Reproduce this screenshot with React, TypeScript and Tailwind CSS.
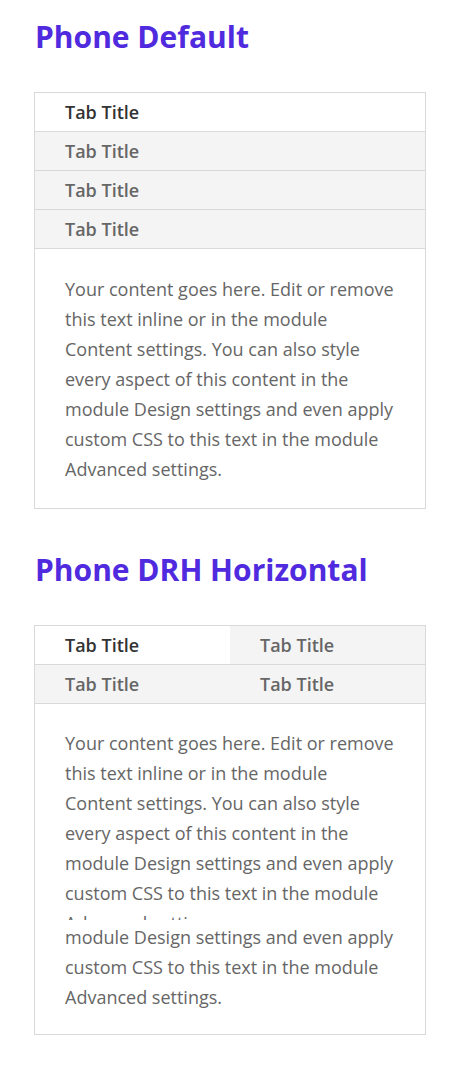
import React from "react";

const LINES = [
  "Your content goes here. Edit or remove",
  "this text inline or in the module",
  "Content settings. You can also style",
  "every aspect of this content in the",
  "module Design settings and even apply",
  "custom CSS to this text in the module",
  "Advanced settings.",
];

function Lines({ lines }: { lines: string[] }) {
  return (
    <>
      {lines.map((l, i) => (
        <p key={i} className="whitespace-nowrap">
          {l}
        </p>
      ))}
    </>
  );
}

function Heading({ children }: { children: React.ReactNode }) {
  return (
    <h2 className="pl-px text-[30px] font-bold leading-[30px] text-[#502ade]">
      {children}
    </h2>
  );
}

function Tab({ active, children }: { active?: boolean; children: React.ReactNode }) {
  return (
    <div
      className={
        "px-[30px] py-1 text-[18px] font-semibold leading-[30px] " +
        (active ? "bg-white text-[#333333]" : "bg-[#f4f4f4] text-[#666666]")
      }
    >
      {children}
    </div>
  );
}

export default function App() {
  return (
    <div
      className="min-h-[1068px] w-[458px] bg-white pl-[34px] pt-[22px]"
      style={{ fontFamily: '"Open Sans", "Liberation Sans", sans-serif' }}
    >
      <Heading>Phone Default</Heading>
      <div className="mt-[40px] w-[392px] border border-[#d9d9d9]">
        <div className="flex flex-col">
          <div className="border-b border-[#d9d9d9]">
            <Tab active>Tab Title</Tab>
          </div>
          <div className="border-b border-[#d9d9d9]">
            <Tab>Tab Title</Tab>
          </div>
          <div className="border-b border-[#d9d9d9]">
            <Tab>Tab Title</Tab>
          </div>
          <div className="border-b border-[#d9d9d9]">
            <Tab>Tab Title</Tab>
          </div>
        </div>
        <div className="px-[30px] pb-6 pt-[25px] text-[18px] leading-[30px] text-[#666666]">
          <Lines lines={LINES} />
        </div>
      </div>

      <div className="mt-[46px]">
        <Heading>Phone DRH Horizontal</Heading>
      </div>
      <div className="mt-[40px] w-[392px] border border-[#d9d9d9]">
        <div className="grid grid-cols-2 border-b border-[#d9d9d9]">
          <Tab active>Tab Title</Tab>
          <Tab>Tab Title</Tab>
        </div>
        <div className="grid grid-cols-2 border-b border-[#d9d9d9]">
          <Tab>Tab Title</Tab>
          <Tab>Tab Title</Tab>
        </div>
        <div className="text-[18px] leading-[30px] text-[#666666]">
          <div className="h-[216px] overflow-hidden px-[30px] pt-6">
            <Lines lines={LINES} />
          </div>
          <div className="px-[30px] pb-[22px] pt-[2px]">
            <Lines lines={LINES.slice(4)} />
          </div>
        </div>
      </div>
    </div>
  );
}
